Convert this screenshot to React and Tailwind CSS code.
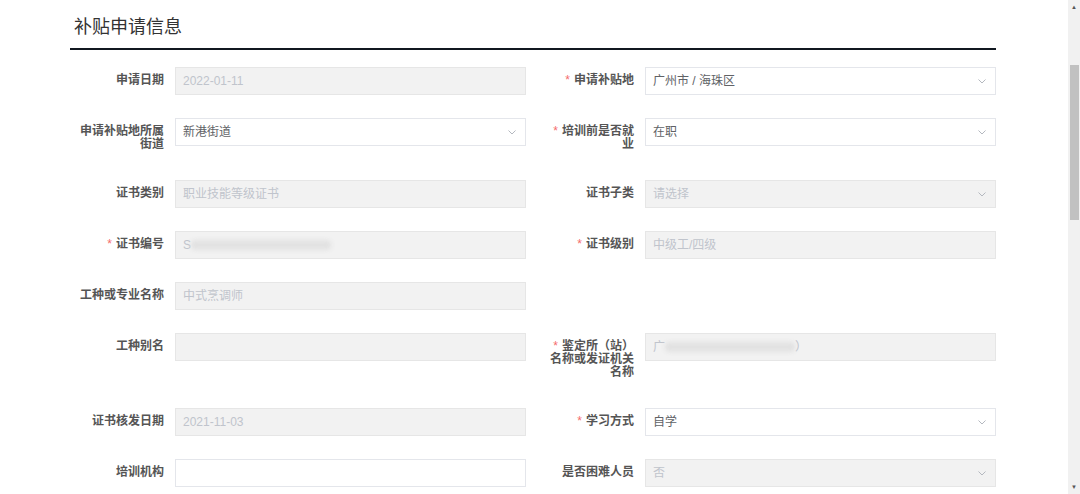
import React from "react";

const FONT = { fontFamily: '"Liberation Sans", "Noto Sans CJK SC", sans-serif' };

const Chevron = () => (
  <svg width="10" height="10" viewBox="0 0 10 10" className="shrink-0">
    <path d="M1.5 3.5 L5 7 L8.5 3.5" fill="none" stroke="#b4b8bf" strokeWidth="1" />
  </svg>
);

const Blur = ({ w }) => (
  <span className={`inline-block h-[10px] ${w} bg-[#e2e2e2] blur-[2px] rounded-sm`} />
);

const Field = ({ label, required, children, disabled, select, empty }) => {
  if (empty) return <div />;
  return (
    <div className="flex items-start mb-[23px]">
      <div className="w-[105px] shrink-0 pr-[11px] pt-[7px] pb-[6px] text-right text-[12px] leading-[13px] font-bold text-[#555]">
        {required && <span className="text-[#f56c6c] mr-[4px] font-normal">*</span>}
        {label.map((l, i) => (
          <React.Fragment key={i}>
            {i > 0 && <br />}
            {l}
          </React.Fragment>
        ))}
      </div>
      <div
        className={`flex-1 h-[28px] flex items-center pl-[7px] pr-[8px] border text-[12px] ${
          disabled
            ? "bg-[#f2f2f2] border-[#e6e6e6] text-[#c0c4cc]"
            : "bg-white border-[#e4e6eb] text-[#606266]"
        }`}
      >
        <div className="flex-1 flex items-center whitespace-nowrap overflow-hidden">{children}</div>
        {select && <Chevron />}
      </div>
    </div>
  );
};

export default function App() {
  return (
    <div className="w-full h-[494px] flex bg-white overflow-hidden" style={FONT}>
      <div className="flex-1 pl-[70px]">
        <div className="w-[926px]">
          <div className="pt-[15px] pb-[9px] pl-[4px] border-b-2 border-[#111820] text-[18px] leading-[24px] text-[#333]">
            补贴申请信息
          </div>
          <div className="grid grid-cols-2 gap-x-[14px] mt-[17px]">
            <Field label={["申请日期"]} disabled>2022-01-11</Field>
            <Field label={["申请补贴地"]} required select>广州市 / 海珠区</Field>

            <Field label={["申请补贴地所属", "街道"]} select>新港街道</Field>
            <Field label={["培训前是否就", "业"]} required select>在职</Field>

            <Field label={["证书类别"]} disabled>职业技能等级证书</Field>
            <Field label={["证书子类"]} disabled select>请选择</Field>

            <Field label={["证书编号"]} required disabled>
              <span>S</span>
              <Blur w="w-[140px]" />
            </Field>
            <Field label={["证书级别"]} required disabled>中级工/四级</Field>

            <Field label={["工种或专业名称"]} disabled>中式烹调师</Field>
            <Field empty />

            <Field label={["工种别名"]} disabled>{""}</Field>
            <Field label={["鉴定所（站）", "名称或发证机关", "名称"]} required disabled>
              <span>广</span>
              <Blur w="w-[130px]" />
              <span>）</span>
            </Field>

            <Field label={["证书核发日期"]} disabled>2021-11-03</Field>
            <Field label={["学习方式"]} required select>自学</Field>

            <Field label={["培训机构"]}>{""}</Field>
            <Field label={["是否困难人员"]} disabled select>否</Field>
          </div>
        </div>
      </div>
      <div className="w-[12px] h-full bg-[#f1f1f1] flex flex-col items-center">
        <div className="h-[14px] flex items-center justify-center text-[6px] text-[#555]">▲</div>
        <div className="h-[51px]" />
        <div className="w-[9px] h-[155px] bg-[#c1c1c1]" />
        <div className="flex-1" />
        <div className="h-[14px] flex items-center justify-center text-[6px] text-[#555]">▼</div>
      </div>
    </div>
  );
}
